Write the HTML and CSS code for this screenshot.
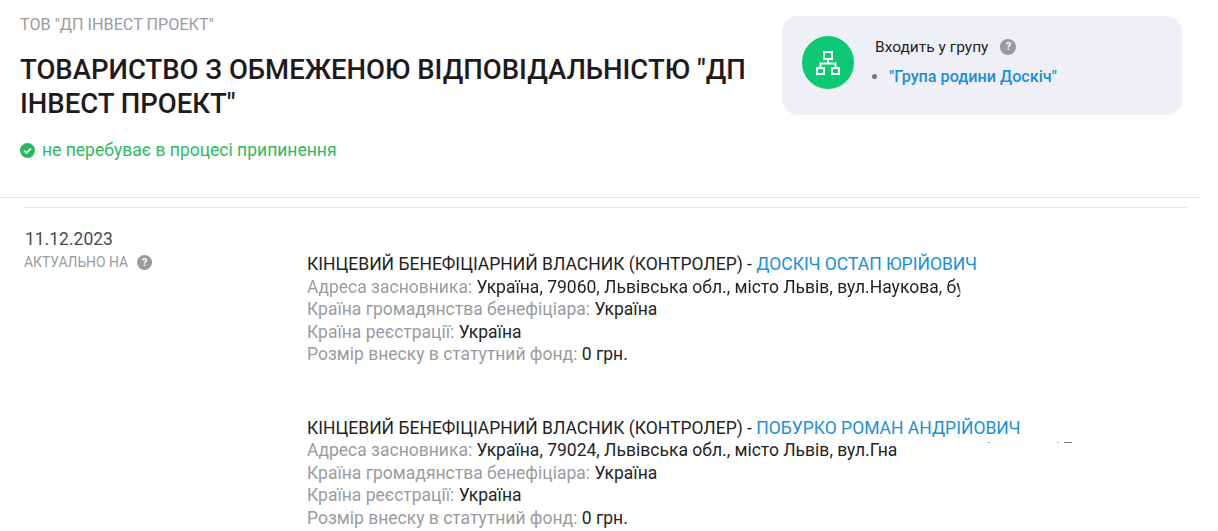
FILE: index.html
```html
<!DOCTYPE html>
<html lang="uk">
<head>
<meta charset="utf-8">
<title>ТОВ "ДП ІНВЕСТ ПРОЕКТ"</title>
<link rel="stylesheet" href="styles.css">
</head>
<body>
<div class="page">
  <header class="head">
    <div class="head-main">
      <p class="short-name">ТОВ "ДП ІНВЕСТ ПРОЕКТ"</p>
      <h1 class="full-name">ТОВАРИСТВО З ОБМЕЖЕНОЮ ВІДПОВІДАЛЬНІСТЮ "ДП ІНВЕСТ ПРОЕКТ"</h1>
      <p class="status">
        <svg class="status-icon" viewBox="0 0 16 16"><circle cx="8" cy="8" r="8" fill="#27b85c"/><path d="M4.4 8.3l2.5 2.4 4.7-4.8" fill="none" stroke="#fff" stroke-width="2"/></svg>
        не перебуває в процесі припинення
      </p>
    </div>
    <aside class="group-card">
      <div class="group-badge">
        <svg viewBox="0 0 24 24" width="24" height="24" fill="none" stroke="#fff" stroke-width="2"><rect x="8" y="1" width="8" height="7"/><rect x="1" y="17" width="7" height="6"/><rect x="16" y="17" width="7" height="6"/><path d="M12 8v4.500M4.500 17v-4.500h15V17"/></svg>
      </div>
      <div class="group-info">
        <div class="group-title">Входить у групу <span class="help help-md">?</span></div>
        <ul class="group-list"><li><a href="#">"Група родини Доскіч"</a></li></ul>
      </div>
    </aside>
  </header>
  <section class="history">
    <div class="date-col">
      <div class="date">11.12.2023</div>
      <div class="date-label">АКТУАЛЬНО НА <span class="help help-sm">?</span></div>
    </div>
    <div class="entries">
      <article class="entry">
        <div class="entry-title">КІНЦЕВИЙ БЕНЕФІЦІАРНИЙ ВЛАСНИК (КОНТРОЛЕР) - <a href="#">ДОСКІЧ ОСТАП ЮРІЙОВИЧ</a></div>
        <div class="addr addr-faded"><span class="key">Адреса засновника:</span> Україна, 79060, Львівська обл., місто Львів, вул.Наукова, бу</div>
        <div><span class="key">Країна громадянства бенефіціара:</span> Україна</div>
        <div><span class="key">Країна реєстрації:</span> Україна</div>
        <div><span class="key">Розмір внеску в статутний фонд:</span> 0 грн.</div>
      </article>
      <article class="entry">
        <div class="entry-title">КІНЦЕВИЙ БЕНЕФІЦІАРНИЙ ВЛАСНИК (КОНТРОЛЕР) - <a href="#">ПОБУРКО РОМАН АНДРІЙОВИЧ</a></div>
        <div class="addr addr-specks"><span class="key">Адреса засновника:</span> Україна, 79024, Львівська обл., місто Львів, вул.Гна</div>
        <div><span class="key">Країна громадянства бенефіціара:</span> Україна</div>
        <div><span class="key">Країна реєстрації:</span> Україна</div>
        <div><span class="key">Розмір внеску в статутний фонд:</span> 0 грн.</div>
      </article>
    </div>
  </section>
</div>
</body>
</html>
```
FILE: styles.css
```css
* { box-sizing: border-box; }
html, body { margin: 0; background: #fff; overflow: hidden; }
body { font-family: Roboto, "Liberation Sans", sans-serif; font-size: 17.5px; line-height: 22.4px; color: #1f1f24; }
a { color: #1a8fdc; text-decoration: none; }
.page { width: 1200px; height: 531px; overflow: hidden; }
.head { display: flex; justify-content: space-between; height: 198px; padding: 16px 18px 0 20px; border-bottom: 1px solid #e4e4e7; }
.head-main { width: 740px; }
.short-name { margin: 0; font-size: 16.2px; line-height: 18px; color: #9b9b9f; }
.full-name { margin: 19px 0 0; font-size: 27.5px; line-height: 34px; font-weight: 500; color: #1f1a1c; }
.status { display: flex; align-items: center; gap: 7px; margin: 18px 0 0; color: #2fb95f; line-height: 22px; }
.status-icon { width: 15px; height: 15px; flex: none; }
.group-card { display: flex; align-items: flex-start; gap: 20px; width: 400px; height: 99px; padding: 20px; border-radius: 16px; background: #eff0f5; }
.group-badge { display: flex; align-items: center; justify-content: center; width: 52px; height: 53px; border-radius: 50%; background: #0cc875; flex: none; }
.group-title { display: flex; align-items: center; gap: 12px; padding-left: 1px; font-size: 15.5px; line-height: 22px; }
.group-list { margin: 8px 0 0; padding: 0 0 0 15px; color: #777; line-height: 22px; font-size: 16.2px; }
.group-list a { font-weight: 500; }
.help { display: inline-flex; align-items: center; justify-content: center; border-radius: 50%; background: #9a9a9a; color: #fff; font-weight: 700; }
.help-md { width: 16px; height: 16px; font-size: 11px; line-height: 16px; }
.help-sm { width: 15px; height: 15px; margin-left: 9px; font-size: 11px; line-height: 15px; }
.history { display: flex; margin: 9px 13px 0 24px; padding-top: 20px; border-top: 1px solid #e6e6e8; }
.date-col { width: 283px; flex: none; }
.date { color: #4a4a52; line-height: 22px; padding-left: 1px; }
.date-label { display: flex; align-items: center; margin-top: 2px; font-size: 13.9px; line-height: 20px; color: #9b9b9f; }
.entries { padding-top: 25px; }
.entry { margin-bottom: 51px; }
.entry:last-child { margin-bottom: 0; }
.entry-title { margin-bottom: 0.5px; }
.key { color: #9b9b9f; }
.addr { position: relative; white-space: nowrap; }
.addr-faded { width: 656px; -webkit-mask-image: linear-gradient(90deg, #000 calc(100% - 4px), transparent calc(100% - 2px)); mask-image: linear-gradient(90deg, #000 calc(100% - 4px), transparent calc(100% - 2px)); }
.addr-specks::after {
  content: "";
  position: absolute;
  left: 681px;
  top: 3px;
  width: 85px;
  height: 1px;
  background:
    linear-gradient(#9a9aa8, #9a9aa8) 0 0 / 2px 1px no-repeat,
    linear-gradient(#b8b8c8, #b8b8c8) 69px 0 / 2px 1px no-repeat,
    linear-gradient(#77777c, #77777c) 76px 0 / 8px 1px no-repeat;
}
```
